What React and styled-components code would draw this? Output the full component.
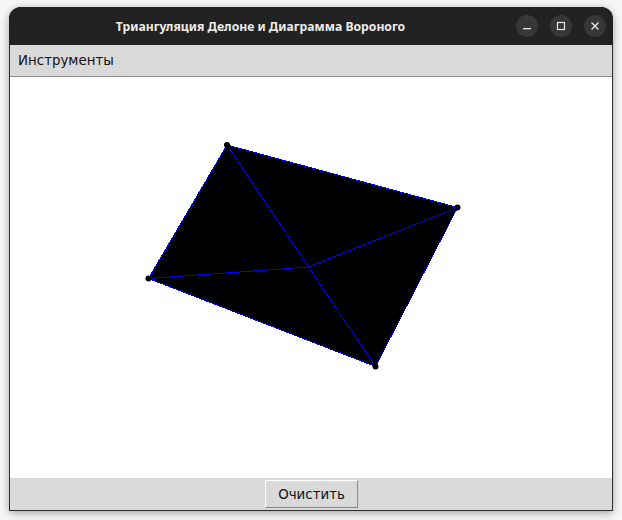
import React from "react";
import styled, { createGlobalStyle } from "styled-components";

const Global = createGlobalStyle`
  html, body { margin: 0; padding: 0; background: #f6f6f6; }
  body { width: 622px; height: 520px; overflow: hidden; }
`;

const Page = styled.div`
  width: 622px;
  height: 520px;
  padding: 7px 9px 9px 9px;
  box-sizing: border-box;
`;

const Window = styled.div`
  width: 604px;
  height: 504px;
  display: flex;
  flex-direction: column;
  border-radius: 12px 12px 0 0;
  box-shadow: 0 2px 9px rgba(0, 0, 0, 0.35);
  overflow: hidden;
  background: #222;
`;

const TitleBar = styled.div`
  height: 38px;
  flex: none;
  display: flex;
  align-items: center;
  background: #222222;
  padding-right: 7px;
`;

const Title = styled.div`
  flex: 1;
  text-align: center;
  color: #ececec;
  font-family: "Noto Sans", "DejaVu Sans", sans-serif;
  font-weight: 700;
  font-size: 12.2px;
  padding-right: 4px;
  padding-top: 1px;
`;

const Controls = styled.div`
  display: flex;
  gap: 12px;
`;

const CtrlButton = styled.div`
  width: 22px;
  height: 22px;
  border-radius: 50%;
  background: #373737;
  display: flex;
  align-items: center;
  justify-content: center;
`;

const Body = styled.div`
  flex: 1;
  display: flex;
  flex-direction: column;
  border: 1px solid #2e2e2e;
  border-top: none;
  background: #d9d9d9;
`;

const MenuBar = styled.div`
  height: 31px;
  flex: none;
  display: flex;
  align-items: center;
  padding-left: 8px;
  background: #d9d9d9;
  border-bottom: 1px solid #8c8c8c;
  font-family: "DejaVu Sans", sans-serif;
  font-size: 13.4px;
  color: #111;
`;

const Canvas = styled.div`
  flex: 1;
  background: #ffffff;
  position: relative;
`;

const BottomBar = styled.div`
  height: 32px;
  flex: none;
  display: flex;
  justify-content: center;
  align-items: flex-start;
  padding-top: 2px;
  box-sizing: border-box;
  background: #d9d9d9;
`;

const Button = styled.button`
  width: 93px;
  height: 28px;
  margin-left: 1px;
  background: #d9d9d9;
  border: 1px solid;
  border-color: #ffffff #8a8a8a #8a8a8a #ffffff;
  font-family: "DejaVu Sans", sans-serif;
  font-size: 13.4px;
  color: #111;
  padding: 0;
`;

const OX = 10;
const OY = 77;
const pts = {
  top: [227, 145],
  right: [457.5, 207.5],
  left: [148.5, 278.5],
  bottom: [375.5, 366.5],
  mid: [308.5, 267],
};
const p = (k) => [pts[k][0] - OX, pts[k][1] - OY];

function Diagram() {
  const t = p("top"), r = p("right"), l = p("left"), b = p("bottom"), m = p("mid");
  const poly = [t, r, b, l].map((q) => q.join(",")).join(" ");
  const lines = [
    [t, r], [r, b], [b, l], [l, t],
    [t, m], [m, b], [l, m], [m, r],
  ];
  return (
    <svg width="602" height="401" style={{ display: "block" }}>
      <polygon points={poly} fill="#000" />
      {lines.map(([a, c], i) => (
        <line
          key={i}
          x1={a[0]}
          y1={a[1]}
          x2={c[0]}
          y2={c[1]}
          stroke="#0000ff"
          strokeWidth="1"
          shapeRendering="crispEdges"
        />
      ))}
      {[t, r, l, b].map((q, i) => (
        <circle key={i} cx={q[0]} cy={q[1]} r="3" fill="#000" />
      ))}
    </svg>
  );
}

export default function App() {
  return (
    <>
      <Global />
      <Page>
        <Window>
          <TitleBar>
            <Title>Триангуляция Делоне и Диаграмма Вороного</Title>
            <Controls>
              <CtrlButton>
                <svg width="10" height="10" viewBox="0 0 10 10">
                  <rect x="1" y="7" width="8" height="1.3" fill="#e6e6e6" />
                </svg>
              </CtrlButton>
              <CtrlButton>
                <svg width="10" height="10" viewBox="0 0 10 10">
                  <rect x="1.5" y="1.5" width="7" height="7" fill="none" stroke="#e6e6e6" strokeWidth="1.2" />
                </svg>
              </CtrlButton>
              <CtrlButton>
                <svg width="10" height="10" viewBox="0 0 10 10">
                  <path d="M1.5 1.5 L8.5 8.5 M8.5 1.5 L1.5 8.5" stroke="#e6e6e6" strokeWidth="1.4" />
                </svg>
              </CtrlButton>
            </Controls>
          </TitleBar>
          <Body>
            <MenuBar>Инструменты</MenuBar>
            <Canvas>
              <Diagram />
            </Canvas>
            <BottomBar>
              <Button>Очистить</Button>
            </BottomBar>
          </Body>
        </Window>
      </Page>
    </>
  );
}
